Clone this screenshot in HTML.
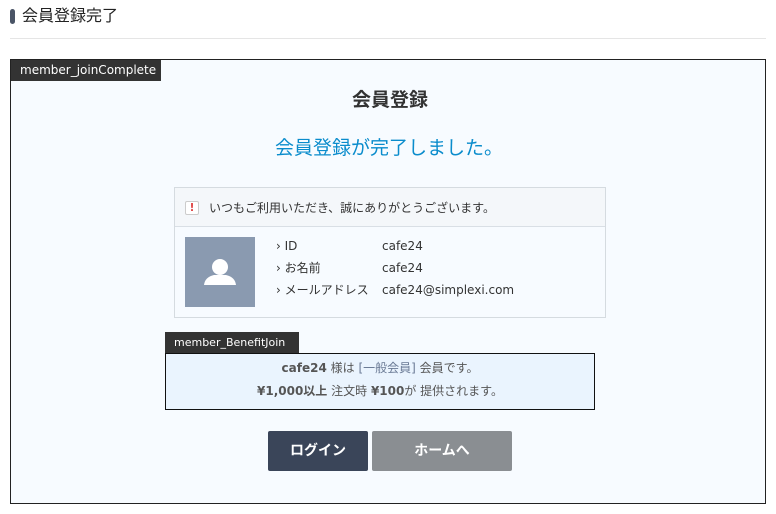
<!DOCTYPE html>
<html><head><meta charset="utf-8"><style>
*{margin:0;padding:0;box-sizing:border-box}
body{width:776px;height:514px;background:#fff;position:relative;font-family:"DejaVu Sans","Noto Sans CJK JP",sans-serif;color:#333;overflow:hidden}
.a{position:absolute;white-space:nowrap}
</style></head><body>
<div class="a" style="left:10px;top:9px;width:5px;height:15px;background:#4a5466;border-radius:3px"></div>
<div class="a" style="left:22px;top:6px;font-size:16px;line-height:20px;color:#222">会員登録完了</div>
<div class="a" style="left:10px;top:38px;width:756px;height:1px;background:#e5e5e5"></div>

<div class="a" style="left:10px;top:59px;width:756px;height:445px;border:1px solid #222;background:#f7fbff"></div>
<div class="a" style="left:11px;top:60px;width:150px;height:21px;background:#333;color:#fff;font-size:12px;line-height:21px;padding-left:9px">member_joinComplete</div>

<div class="a" style="left:0;width:776px;text-align:center;top:88px;font-size:19px;font-weight:bold;line-height:24px;color:#333;padding-left:4px">会員登録</div>
<div class="a" style="left:0;width:776px;text-align:center;top:136px;font-size:19px;line-height:24px;color:#0a8ccc;padding-left:2px">会員登録が完了しました。</div>

<div class="a" style="left:174px;top:187px;width:432px;height:131px;border:1px solid #d5dbe0;background:#f7fbff"></div>
<div class="a" style="left:175px;top:188px;width:430px;height:39px;background:#f4f7fa;border-bottom:1px solid #d9dfe5"></div>
<div class="a" style="left:185px;top:201px;width:14px;height:14px;border:1px solid #ccc;border-radius:2px;background:#fff;color:#e04a4a;font-size:11px;font-weight:bold;line-height:12px;text-align:center">!</div>
<div class="a" style="left:209px;top:200px;font-size:12px;line-height:16px;color:#333">いつもご利用いただき、誠にありがとうございます。</div>
<div class="a" style="left:185px;top:237px;width:70px;height:70px;background:#8a9ab0">
<svg width="70" height="70" viewBox="0 0 70 70"><circle cx="35" cy="30" r="8" fill="#fff"/><path d="M19 48 Q20 40 29 38 L41 38 Q50 40 51 48 Z" fill="#fff"/></svg></div>
<div class="a" style="left:276px;top:238px;font-size:12px;line-height:16px;color:#333">› ID</div>
<div class="a" style="left:276px;top:260px;font-size:12px;line-height:16px;color:#333">› お名前</div>
<div class="a" style="left:276px;top:282px;font-size:12px;line-height:16px;color:#333">› メールアドレス</div>
<div class="a" style="left:382px;top:238px;font-size:12px;line-height:16px;color:#333">cafe24</div>
<div class="a" style="left:382px;top:260px;font-size:12px;line-height:16px;color:#333">cafe24</div>
<div class="a" style="left:382px;top:282px;font-size:12px;line-height:16px;color:#333">cafe24@simplexi.com</div>

<div class="a" style="left:165px;top:332px;width:134px;height:21px;background:#333;color:#fff;font-size:11px;line-height:21px;padding-left:9px">member_BenefitJoin</div>
<div class="a" style="left:165px;top:353px;width:430px;height:57px;border:1px solid #111;background:#eaf4fe"></div>
<div class="a" style="left:165px;width:430px;text-align:center;top:360px;font-size:12px;line-height:16px;color:#555"><b>cafe24</b> 様は <span style="color:#6a7a95">[一般会員]</span> 会員です。</div>
<div class="a" style="left:165px;width:430px;text-align:center;top:383px;font-size:12px;line-height:16px;color:#555"><b>¥1,000以上</b> 注文時 <b>¥100</b>が 提供されます。</div>

<div class="a" style="left:268px;top:431px;width:100px;height:40px;background:#3a4559;border-radius:2px;color:#fff;font-size:14px;font-weight:bold;line-height:40px;text-align:center">ログイン</div>
<div class="a" style="left:372px;top:431px;width:140px;height:40px;background:#8a8e92;border-radius:2px;color:#fff;font-size:14px;font-weight:bold;line-height:40px;text-align:center">ホームへ</div>
</body></html>
